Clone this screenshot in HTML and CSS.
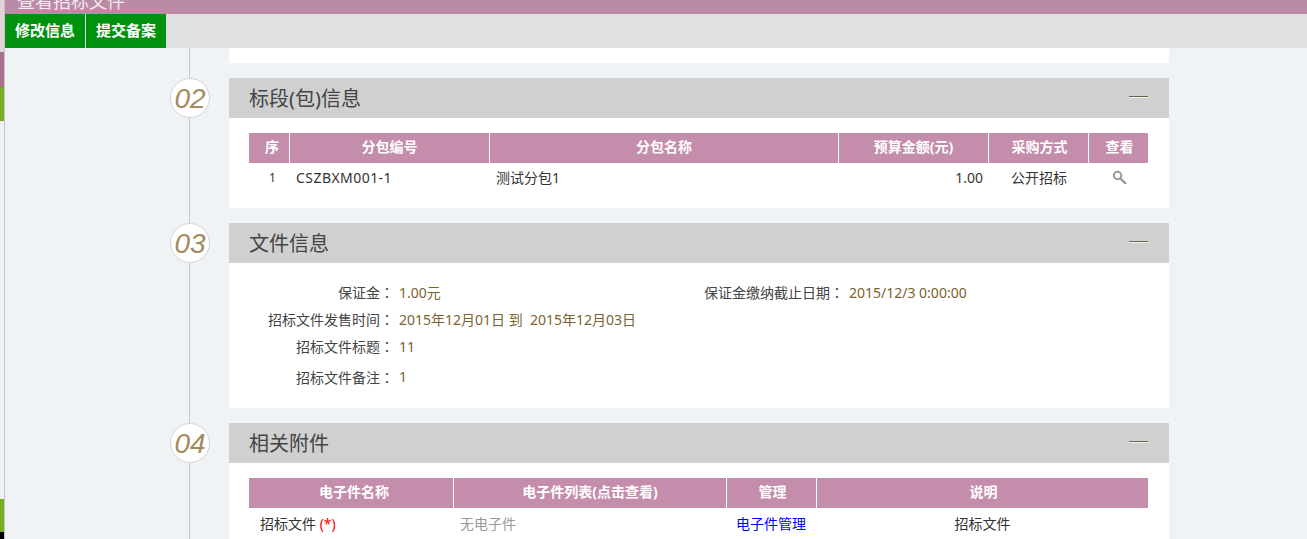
FILE: index.html
```html
<!DOCTYPE html>
<html lang="zh-CN">
<head>
<meta charset="utf-8">
<title>查看招标文件</title>
<link rel="stylesheet" href="styles.css">
</head>
<body>
<div class="page">
  <aside class="strip">
    <div class="strip-a"></div>
    <div class="strip-b"></div>
    <div class="strip-c"></div>
    <div class="strip-d"></div>
    <div class="strip-c2"></div>
    <div class="strip-e"></div>
  </aside>
  <main class="main">
    <div class="titlebar"><span class="title">查看招标文件</span></div>
    <div class="toolbar">
      <a class="btn">修改信息</a>
      <a class="btn">提交备案</a>
    </div>
    <div class="timeline">
      <div class="stub"></div>

      <section class="section">
        <div class="num">02</div>
        <div class="card">
          <header class="card-head"><h2>标段(包)信息</h2><span class="collapse"></span></header>
          <div class="card-body body-pack">
            <table class="grid">
              <colgroup><col class="w41"><col class="w200"><col class="w349"><col class="w150"><col class="w100"><col class="w59"></colgroup>
              <thead><tr><th>序</th><th>分包编号</th><th>分包名称</th><th>预算金额(元)</th><th class="nudge">采购方式</th><th class="nudge">查看</th></tr></thead>
              <tbody><tr>
                <td class="seq">1</td>
                <td class="code">CSZBXM001-1</td>
                <td>测试分包1</td>
                <td class="right">1.00</td>
                <td class="center">公开招标</td>
                <td><svg class="search" viewBox="0 0 14 14" width="14" height="14"><circle cx="4.6" cy="5.5" r="3.7" fill="none" stroke="#999" stroke-width="2"/><path d="M7.5 8.5l5.5 5.5" stroke="#999" stroke-width="2.4" fill="none"/></svg></td>
              </tr></tbody>
            </table>
          </div>
        </div>
      </section>

      <section class="section">
        <div class="num">03</div>
        <div class="card">
          <header class="card-head"><h2>文件信息</h2><span class="collapse"></span></header>
          <div class="card-body body-file">
            <div class="row">
              <span class="label">保证金<span class="colon" lang="zh-TW">：</span></span><span class="value v1">1.00元</span>
              <span class="label">保证金缴纳截止日期<span class="colon" lang="zh-TW">：</span></span><span class="value">2015/12/3 0:00:00</span>
            </div>
            <div class="row">
              <span class="label">招标文件发售时间<span class="colon" lang="zh-TW">：</span></span><span class="value">2015年12月01日 到&nbsp; 2015年12月03日</span>
            </div>
            <div class="row">
              <span class="label">招标文件标题<span class="colon" lang="zh-TW">：</span></span><span class="value">11</span>
            </div>
            <div class="row row-tall">
              <span class="label">招标文件备注<span class="colon" lang="zh-TW">：</span></span><span class="value">1</span>
            </div>
          </div>
        </div>
      </section>

      <section class="section">
        <div class="num">04</div>
        <div class="card">
          <header class="card-head"><h2>相关附件</h2><span class="collapse"></span></header>
          <div class="card-body body-pack">
            <table class="grid grid-files">
              <colgroup><col class="w205"><col class="w273"><col class="w90"><col class="w331"></colgroup>
              <thead><tr><th>电子件名称</th><th>电子件列表(点击查看)</th><th class="nudge">管理</th><th class="nudge">说明</th></tr></thead>
              <tbody><tr>
                <td class="name">招标文件 <span class="req">(*)</span></td>
                <td class="muted">无电子件</td>
                <td class="center link-cell"><a class="link">电子件管理</a></td>
                <td class="center">招标文件</td>
              </tr></tbody>
            </table>
          </div>
        </div>
      </section>
    </div>
  </main>
</div>
</body>
</html>
```

FILE: styles.css
```css
* { box-sizing: border-box; }
html, body { margin: 0; padding: 0; height: 539px; overflow: hidden; }
body {
  background: #eff3f6;
  color: #333;
  font-family: "Noto Sans", "Noto Sans CJK SC", "Liberation Sans", sans-serif;
  font-size: 14px;
}
.page { display: flex; height: 539px; overflow: hidden; }

.strip {
  flex: 0 0 5px;
  display: flex;
  flex-direction: column;
  height: 539px;
  border-right: 1px solid #c4c4c4;
}
.strip-a { height: 52px; background: #e2d2da; }
.strip-b { height: 35px; background: #a86f90; }
.strip-c { height: 34px; background: #76ae1e; }
.strip-d { height: 378px; background: #eff3f6; }
.strip-c2 { height: 33px; background: #76ae1e; }
.strip-e { height: 7px; background: #000; }

.main { flex: 1; min-width: 0; }

.titlebar { height: 14px; background: #bb8ba6; overflow: hidden; padding-left: 12px; }
.title { display: block; margin-top: -11px; font-size: 18px; line-height: 24px; color: #f4eaf0; }

.toolbar { height: 34px; background: #e0e0e0; display: flex; }
.btn {
  width: 80px;
  background: #00920f;
  color: #fff;
  font-size: 15px;
  font-weight: 700;
  line-height: 32px;
  text-align: center;
}
.btn + .btn { margin-left: 1px; }

.timeline { position: relative; padding-left: 165px; height: 491px; overflow: hidden; }
.timeline::before {
  content: "";
  position: absolute;
  left: 184px;
  top: 0;
  bottom: 0;
  width: 1px;
  background: #c9c9c9;
}
.stub { width: 940px; height: 15px; margin-left: 59px; background: #fff; }

.section { display: flex; gap: 19px; margin-top: 15px; position: relative; }
.num {
  flex: 0 0 40px;
  height: 40px;
  border-radius: 50%;
  border: 1px solid #d4d4d4;
  background: #fff;
  color: #a08c5c;
  font-family: "Liberation Sans", sans-serif;
  font-style: italic;
  font-size: 28px;
  line-height: 39px;
  text-align: center;
}
.card { width: 940px; background: #fff; }
.card-head {
  height: 40px;
  background: #d0d0d0;
  display: flex;
  align-items: center;
  justify-content: space-between;
  padding: 0 21px 0 20px;
}
.card-head h2 { margin: 0; padding-top: 1px; font-size: 20px; font-weight: 400; line-height: 39px; color: #444; }
.collapse {
  width: 19px;
  height: 2px;
  margin-top: -2px;
  background: #6d6048;
  border-bottom: 1px solid #f4f4f4;
}
.card-body { background: #fff; }
.body-pack { padding: 15px 21px 15px 20px; }
.body-file { padding: 17px 0 15px; height: 145px; }

.grid { width: 899px; table-layout: fixed; border-collapse: separate; border-spacing: 0; }
.w41 { width: 41px; } .w200 { width: 200px; } .w349 { width: 349px; }
.w150 { width: 150px; } .w100 { width: 100px; } .w59 { width: 59px; }
.w205 { width: 205px; } .w273 { width: 273px; } .w90 { width: 90px; } .w331 { width: 331px; }
.grid th {
  height: 30px;
  padding: 0 0 2px;
  background: #c48dab;
  color: #fff;
  font-size: 14px;
  font-weight: 700;
  line-height: 20px;
  text-align: center;
  border-right: 1px solid #fff;
}
.grid th:first-child { padding-left: 6px; }
.grid th:last-child { border-right: 0; }
.grid th.nudge { padding-left: 2px; }
.grid td { height: 30px; padding: 0 6px 2px; font-size: 14px; color: #333; white-space: nowrap; }
.grid .seq { font-size: 12px; text-align: center; padding: 0 0 2px 6px; }
.grid .code { letter-spacing: 0.45px; }
.grid .right { text-align: right; padding-right: 6px; }
.grid .center { text-align: center; }
.grid .name { padding-left: 11px; }
.grid .muted { color: #999; }
.grid-files td { padding-bottom: 0; }
.grid .link-cell { padding-left: 5px; padding-right: 7px; }
.req { color: #f00; }
.link { color: #00f; }
.search { display: block; margin: -1px 0 0 18px; }

.row { display: flex; height: 27px; line-height: 25px; }
.row-tall { height: 32px; line-height: 32px; }
.label { width: 170px; padding-right: 5px; text-align: right; color: #444; }
.colon { font-family: "Noto Sans CJK TC", sans-serif; }
.value { color: #7a6330; }
.v1 { width: 280px; }
```
